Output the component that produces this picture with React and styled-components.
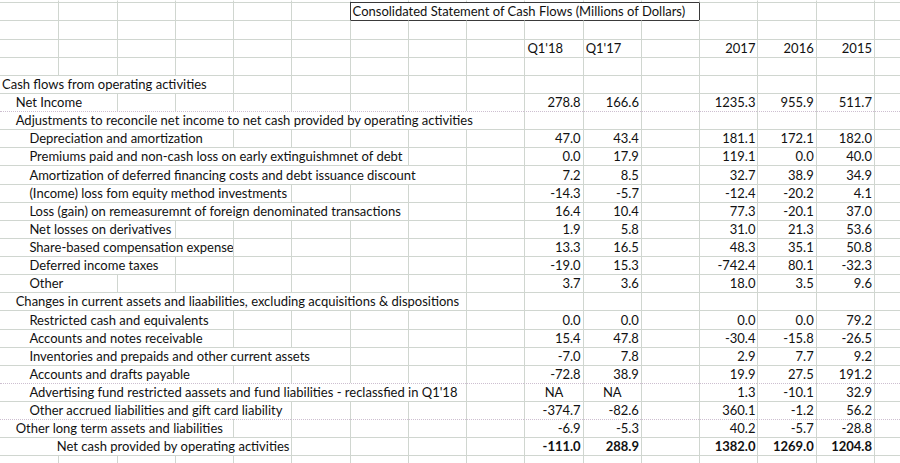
import React from 'react';
import styled, { createGlobalStyle } from 'styled-components';

const GRID = '#d0d6d0';
const DOT = '#cdbfd0';
const DARK = '#3a3a3a';
const COL = 58.27;
const ROW = 18.136;

const GlobalStyle = createGlobalStyle`
  html, body { margin: 0; padding: 0; background: #fff; }
  body { font-family: Lato, "Liberation Sans", sans-serif; color: #000; }
`;

const Sheet = styled.div`
  width: 900px;
  height: 463px;
  overflow: hidden;
  background: #fff;
  display: flex;
  flex-direction: column;
`;

const Row = styled.div`
  display: grid;
  grid-template-columns: repeat(16, ${COL}px);
  height: ${(p) => p.$h ?? ROW}px;
  flex: none;
`;

const Cell = styled.div`
  box-sizing: border-box;
  grid-column: span ${(p) => p.$span || 1};
  border-top: 1px ${(p) => (p.$dotted ? 'dotted' : 'solid')}
    ${(p) => (p.$darkTop ? DARK : p.$noTop ? 'transparent' : p.$dotted ? DOT : GRID)};
  border-left: ${(p) => (p.$first ? 'none' : `1px solid ${p.$darkLeft ? DARK : GRID}`)};
  display: flex;
  align-items: flex-end;
  justify-content: ${(p) => (p.$align === 'right' ? 'flex-end' : p.$align === 'center' ? 'center' : 'flex-start')};
  padding: 0 2px 2px ${(p) => 2 + (p.$level || 0) * 13.7}px;
  font-size: 13px;
  line-height: 14px;
  font-weight: ${(p) => (p.$bold ? 700 : 400)};
  color: #111;
  white-space: nowrap;
  overflow: visible;
  min-width: 0;
`;

const rows = [
  { label: 'Cash flows from operating activities', level: 0, span: 4 },
  { label: 'Net Income', level: 1, span: 2, v: ['278.8', '166.6', '1235.3', '955.9', '511.7'] },
  { label: 'Adjustments to reconcile net income to net cash provided by operating activities', level: 1, span: 9, dotted: true },
  { label: 'Depreciation and amortization', level: 2, span: 4, v: ['47.0', '43.4', '181.1', '172.1', '182.0'] },
  { label: 'Premiums paid and non-cash loss on early extinguishmnet of debt', level: 2, span: 7, v: ['0.0', '17.9', '119.1', '0.0', '40.0'] },
  { label: 'Amortization of deferred financing costs and debt issuance discount', level: 2, span: 8, v: ['7.2', '8.5', '32.7', '38.9', '34.9'] },
  { label: '(Income) loss fom equity method investments', level: 2, span: 5, v: ['-14.3', '-5.7', '-12.4', '-20.2', '4.1'] },
  { label: 'Loss (gain) on remeasuremnt of foreign denominated transactions', level: 2, span: 7, v: ['16.4', '10.4', '77.3', '-20.1', '37.0'] },
  { label: 'Net losses on derivatives', level: 2, span: 3, v: ['1.9', '5.8', '31.0', '21.3', '53.6'] },
  { label: 'Share-based compensation expense', level: 2, span: 4, v: ['13.3', '16.5', '48.3', '35.1', '50.8'] },
  { label: 'Deferred income taxes', level: 2, span: 3, v: ['-19.0', '15.3', '-742.4', '80.1', '-32.3'] },
  { label: 'Other', level: 2, span: 2, v: ['3.7', '3.6', '18.0', '3.5', '9.6'] },
  { label: 'Changes in current assets and liaabilities, excluding acquisitions & dispositions', level: 1, span: 8 },
  { label: 'Restricted cash and equivalents', level: 2, span: 4, v: ['0.0', '0.0', '0.0', '0.0', '79.2'] },
  { label: 'Accounts and notes receivable', level: 2, span: 4, v: ['15.4', '47.8', '-30.4', '-15.8', '-26.5'] },
  { label: 'Inventories and prepaids and other current assets', level: 2, span: 6, v: ['-7.0', '7.8', '2.9', '7.7', '9.2'] },
  { label: 'Accounts and drafts payable', level: 2, span: 4, v: ['-72.8', '38.9', '19.9', '27.5', '191.2'] },
  { label: "Advertising fund restricted aassets and fund liabilities - reclassfied in Q1'18", level: 2, span: 8, v: ['NA', 'NA', '1.3', '-10.1', '32.9'], dotted: true },
  { label: 'Other accrued liabilities and gift card liability', level: 2, span: 5, v: ['-374.7', '-82.6', '360.1', '-1.2', '56.2'] },
  { label: 'Other long term assets and liabilities', level: 1, span: 4, v: ['-6.9', '-5.3', '40.2', '-5.7', '-28.8'], dotted: true },
  { label: 'Net cash provided by operating activities', level: 4, span: 5, v: ['-111.0', '288.9', '1382.0', '1269.0', '1204.8'], boldValues: true },
];

function blanks(from, to, extra = {}, common = {}) {
  const out = [];
  for (let c = from; c <= to; c++) {
    out.push(<Cell key={`b${c}`} $first={c === 1} {...common} {...(extra[c] || {})} />);
  }
  return out;
}

function ValueCell({ value, bold, dotted }) {
  const align = value === 'NA' ? 'center' : 'right';
  return (
    <Cell $align={align} $bold={bold} $dotted={dotted}>
      {value}
    </Cell>
  );
}

function DataRow({ row }) {
  const d = { $dotted: row.dotted };
  const b = row.boldValues;
  const cells = [
    <Cell key="label" $first $span={row.span} $level={row.level} {...d}>
      {row.label}
    </Cell>,
  ];
  if (!row.v) {
    cells.push(...blanks(row.span + 1, 16, {}, d));
  } else {
    cells.push(...blanks(row.span + 1, 9, {}, d));
    cells.push(<ValueCell key="q18" value={row.v[0]} bold={b} dotted={row.dotted} />);
    cells.push(<ValueCell key="q17" value={row.v[1]} bold={b} dotted={row.dotted} />);
    cells.push(<Cell key="gap" {...d} />);
    cells.push(<ValueCell key="y17" value={row.v[2]} bold={b} dotted={row.dotted} />);
    cells.push(<ValueCell key="y16" value={row.v[3]} bold={b} dotted={row.dotted} />);
    cells.push(<ValueCell key="y15" value={row.v[4]} bold={b} dotted={row.dotted} />);
    cells.push(<Cell key="end" {...d} />);
  }
  return <Row>{cells}</Row>;
}

export default function App() {
  const darkTop = { $darkTop: true };
  return (
    <>
      <GlobalStyle />
      <Sheet>
        <Row $h={2.3}>{blanks(1, 16, {}, { $noTop: true })}</Row>
        <Row>
          {blanks(1, 6)}
          <Cell $span={6} $darkTop $darkLeft>
            Consolidated Statement of Cash Flows (Millions of Dollars)
          </Cell>
          <Cell $darkLeft />
          {blanks(14, 16)}
        </Row>
        <Row>{blanks(1, 16, { 7: darkTop, 8: darkTop, 9: darkTop, 10: darkTop, 11: darkTop, 12: darkTop })}</Row>
        <Row>
          {blanks(1, 9)}
          <Cell>Q1'18</Cell>
          <Cell>Q1'17</Cell>
          <Cell />
          <Cell $align="right">2017</Cell>
          <Cell $align="right">2016</Cell>
          <Cell $align="right">2015</Cell>
          <Cell />
        </Row>
        <Row>{blanks(1, 16)}</Row>
        {rows.map((r, i) => (
          <DataRow key={i} row={r} />
        ))}
        <Row>{blanks(1, 16)}</Row>
      </Sheet>
    </>
  );
}
